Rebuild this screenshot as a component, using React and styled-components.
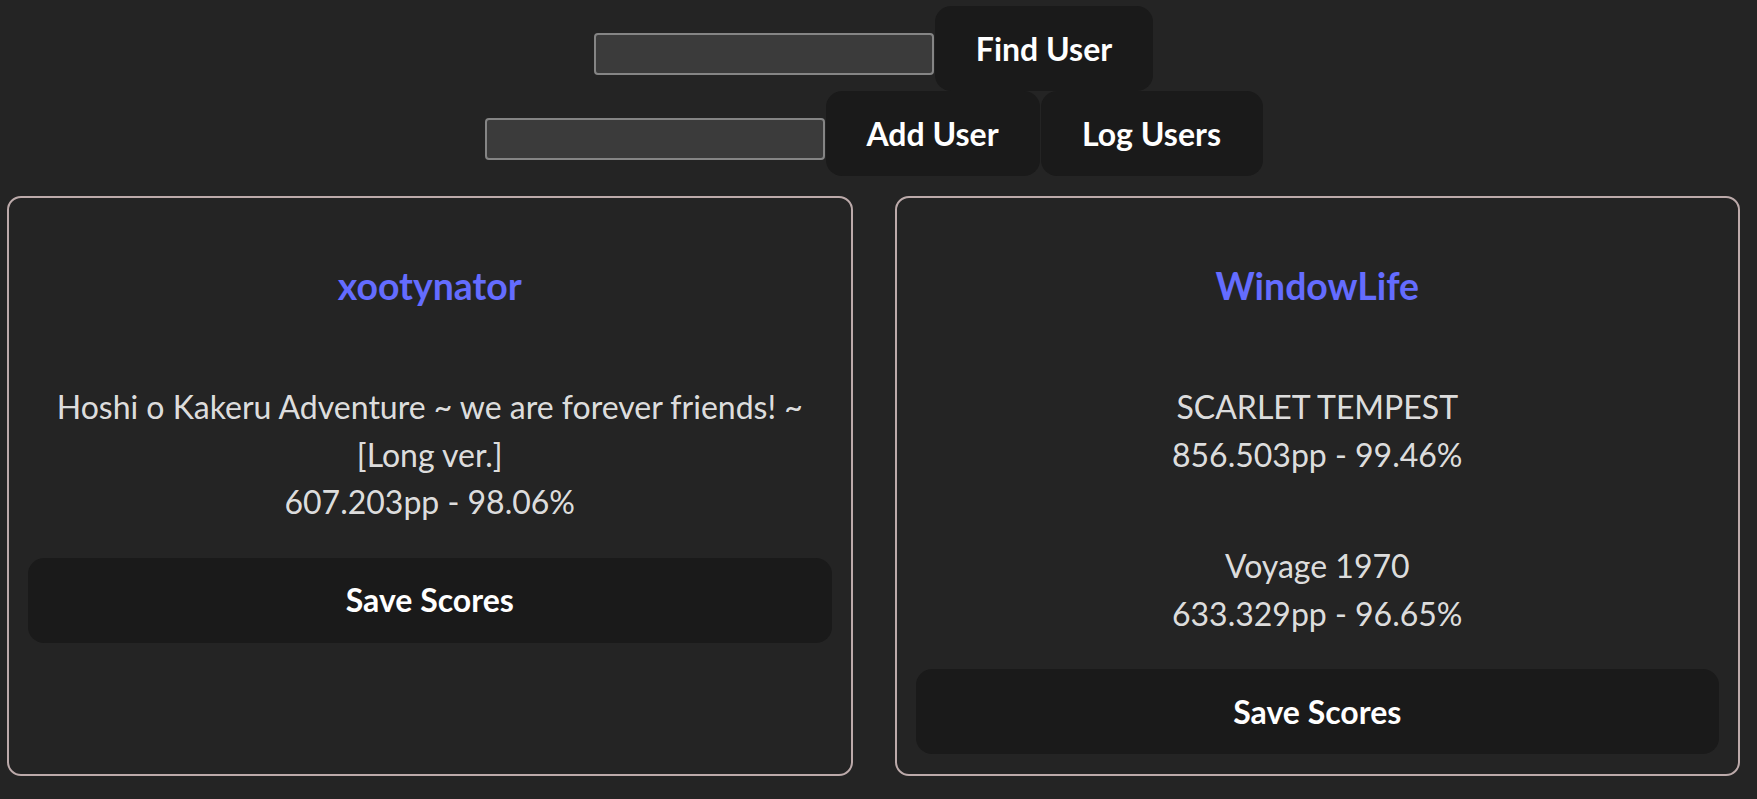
import React from "react";
import styled, { createGlobalStyle } from "styled-components";

const GlobalStyle = createGlobalStyle`
  * {
    box-sizing: border-box;
  }

  body {
    margin: 0;
    background-color: #242424;
    color: rgba(255, 255, 255, 0.87);
    font-family: Lato, "Open Sans", sans-serif;
    font-size: 32px;
    line-height: 1.5;
  }
`;

const Page = styled.div`
  width: 100%;
  padding: 6px 17px 23px 7px;
`;

const ToolbarRow = styled.div`
  display: flex;
  justify-content: center;
  align-items: center;
  gap: 1px;
`;

const TextInput = styled.input`
  width: 340px;
  height: 42px;
  margin-top: 10px;

  border: 2px solid #858585;
  border-radius: 4px;

  background-color: #3b3b3b;
  color: rgba(255, 255, 255, 0.87);
  font-family: inherit;
  font-size: 20px;
  padding: 0 8px;
`;

const Button = styled.button`
  width: ${(props) => (props.$width ? `${props.$width}px` : "100%")};
  height: 85px;

  border: 1px solid transparent;
  border-radius: 16px;

  background-color: #1a1a1a;
  color: #ffffff;

  font-family: inherit;
  font-size: 32px;
  font-weight: 700;
  line-height: 1;

  cursor: pointer;
`;

const ProfileGrid = styled.div`
  display: grid;
  grid-template-columns: 1fr 1fr;
  gap: 42px;

  margin-top: 20px;
`;

const ProfileCard = styled.div`
  display: flex;
  flex-direction: column;

  padding: 23px 19px 20px;

  border: 2px solid #bcaaaa;
  border-radius: 14px;

  text-align: center;
`;

const UserName = styled.h3`
  margin: 37px 0;

  font-size: 37.4px;
  font-weight: 700;
  line-height: 56px;

  color: #646cff;
`;

const ScoreText = styled.p`
  margin: 32px 0;
  line-height: 47.5px;
`;

const profiles = [
  {
    id: 1,
    name: "xootynator",
    scores: [
      {
        title: "Hoshi o Kakeru Adventure ~ we are forever friends! ~ [Long ver.]",
        pp: "607.203",
        acc: "98.06",
      },
    ],
  },
  {
    id: 2,
    name: "WindowLife",
    scores: [
      { title: "SCARLET TEMPEST", pp: "856.503", acc: "99.46" },
      { title: "Voyage 1970", pp: "633.329", acc: "96.65" },
    ],
  },
];

const App = () => {
  return (
    <>
      <GlobalStyle />
      <Page>
        <ToolbarRow>
          <TextInput type="text" />
          <Button $width={218}>Find User</Button>
        </ToolbarRow>
        <ToolbarRow>
          <TextInput type="text" />
          <Button $width={214}>Add User</Button>
          <Button $width={222}>Log Users</Button>
        </ToolbarRow>
        <ProfileGrid>
          {profiles.map((profile) => (
            <ProfileCard key={profile.id}>
              <UserName>{profile.name}</UserName>
              {profile.scores.map((score, index) => (
                <ScoreText key={index}>
                  {score.title}
                  <br />
                  {score.pp}pp - {score.acc}%
                </ScoreText>
              ))}
              <Button>Save Scores</Button>
            </ProfileCard>
          ))}
        </ProfileGrid>
      </Page>
    </>
  );
};

export default App;
